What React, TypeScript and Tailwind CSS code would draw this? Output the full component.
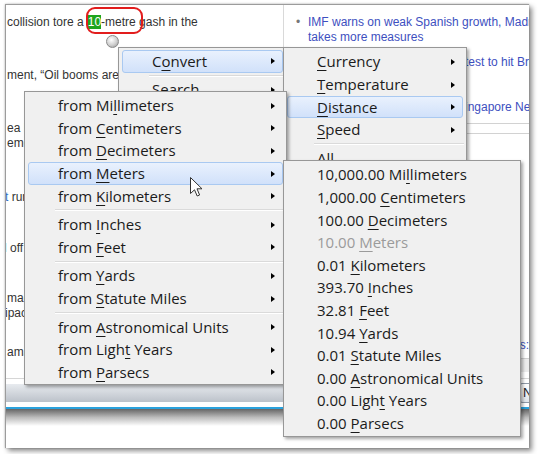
import clsx from "clsx";

type MenuEntry = { label: string; arrow?: boolean; active?: boolean; disabled?: boolean } | "sep";

const CONVERT_MENU: MenuEntry[] = [
  { label: "C&onvert", arrow: true, active: true },
  "sep",
  { label: "&Search", arrow: true },
  "sep",
  { label: "&Copy" },
  { label: "&Define" },
];

const CONVERSION_MENU: MenuEntry[] = [
  { label: "&Currency", arrow: true },
  { label: "&Temperature", arrow: true },
  { label: "&Distance", arrow: true, active: true },
  { label: "&Speed", arrow: true },
  "sep",
  { label: "&All" },
];

const FROM_MENU: MenuEntry[] = [
  { label: "from Mi&llimeters", arrow: true },
  { label: "from &Centimeters", arrow: true },
  { label: "from &Decimeters", arrow: true },
  { label: "from &Meters", arrow: true, active: true },
  { label: "from &Kilometers", arrow: true },
  "sep",
  { label: "from &Inches", arrow: true },
  { label: "from &Feet", arrow: true },
  "sep",
  { label: "from &Yards", arrow: true },
  { label: "from &Statute Miles", arrow: true },
  "sep",
  { label: "from &Astronomical Units", arrow: true },
  { label: "from Ligh&t Years", arrow: true },
  { label: "from &Parsecs", arrow: true },
];

const RESULT_MENU: MenuEntry[] = [
  { label: "10,000.00 Mi&llimeters" },
  { label: "1,000.00 &Centimeters" },
  { label: "100.00 &Decimeters" },
  { label: "10.00 &Meters", disabled: true },
  { label: "0.01 &Kilometers" },
  { label: "393.70 &Inches" },
  { label: "32.81 &Feet" },
  { label: "10.94 &Yards" },
  { label: "0.01 &Statute Miles" },
  { label: "0.00 &Astronomical Units" },
  { label: "0.00 Ligh&t Years" },
  { label: "0.00 &Parsecs" },
];

// "&" marks the access key, as in a Windows resource file
function Mnemonic({ label }: { label: string }) {
  const i = label.indexOf("&");
  if (i < 0) return <>{label}</>;
  return (
    <>
      {label.slice(0, i)}
      <u className="underline decoration-1 underline-offset-[3px]">{label[i + 1]}</u>
      {label.slice(i + 2)}
    </>
  );
}

function Menu({ entries, className }: { entries: MenuEntry[]; className: string }) {
  return (
    <div
      className={clsx(
        "absolute border border-[#979797] bg-[#f0f0f0] font-['Open_Sans',sans-serif] text-[15px] text-[#1b1b1b] shadow-[2px_2px_3px_rgba(0,0,0,0.35)]",
        className,
      )}
    >
      {entries.map((entry, i) =>
        entry === "sep" ? (
          <div key={i} className="flex h-[6px] items-center pl-[30px] pr-[2px]">
            <div className="h-[2px] w-full border-t border-b border-t-[#dadada] border-b-white" />
          </div>
        ) : (
          <div
            key={i}
            className={clsx(
              "mx-[3px] flex h-[22.6px] items-center justify-between rounded-[3px] border pl-[29px] pr-[7px]",
              entry.active
                ? "border-[#a9c9f1] bg-gradient-to-b from-[#e9f1fd] to-[#d1e1fa]"
                : "border-transparent",
              entry.disabled && "text-[#9b9b9b]",
            )}
          >
            <span className="whitespace-nowrap leading-none">
              <Mnemonic label={entry.label} />
            </span>
            {entry.arrow && (
              <span className="h-0 w-0 border-y-[3.5px] border-l-[4px] border-y-transparent border-l-black" />
            )}
          </div>
        ),
      )}
    </div>
  );
}

function ArticleColumn() {
  return (
    <div className="w-[277px] overflow-hidden whitespace-nowrap pl-[1px] text-[12px] leading-[15px] text-[#333]">
      <p className="mt-[9.5px] h-[15px]">
        collision tore a
        <span className="ml-[4px] bg-[#1ea51e] text-white">10</span>-metre gash in the
      </p>
      <p className="mt-[38px]">ment, “Oil booms are not forever,” he said.</p>
      <p className="mt-[38px]">
        ea has been closed to shipping
        <br />
        emergency crews were sent out
      </p>
      <p className="-ml-[2px] mt-[39px]">
        <span className="text-[#2e6fc8]">t</span> runs along the coast
      </p>
      <p className="-ml-[3px] mt-[36px]">
        <span className="text-[#2e6fc8]">l</span> off the northern shore
      </p>
      <p className="mt-[35px]">
        magnitude of the spill
        <br />
        <span className="-ml-[2px]">ipact on the fishing grounds</span>
      </p>
      <p className="mt-[24px]">amazing recovery</p>
    </div>
  );
}

function NewsColumn() {
  return (
    <div className="flex-1 overflow-hidden whitespace-nowrap border-l border-[#d9d9d9] text-[12px] leading-[15px] text-[#3d4fc0]">
      <div className="mt-[9.5px] flex">
        <span className="w-[24px] shrink-0 pl-[12px] text-[#777]">•</span>
        <div>
          IMF warns on weak Spanish growth, Madrid
          <br />
          takes more measures
        </div>
      </div>
      <p className="mt-[10px] pl-[181px]">test to hit Britain</p>
      <p className="mt-[30px] pl-[173px]">Singapore News</p>
      <div className="mt-[8.5px] h-[11px] border-y border-[#d2d2d2]" />
      <p className="mt-[203.5px] text-right">Videos:</p>
      <div className="mt-[5.5px] h-[14px] border-t border-[#cfcfcf] bg-[#ececec]" />
    </div>
  );
}

export default function App() {
  return (
    <div className="relative h-[454px] w-[540px] overflow-hidden bg-white pl-[5px] pt-[4px] font-['Liberation_Sans',Arial,sans-serif]">
      <div className="flex h-[444px] w-[524px] flex-col overflow-hidden border-l border-t border-[#9c9c9c] bg-white shadow-[0_0_2px_rgba(0,0,0,0.25),3px_3px_5px_rgba(0,0,0,0.45)]">
        <div className="flex h-[374px] shrink-0 border-b border-[#d6d6d6]">
          <ArticleColumn />
          <NewsColumn />
        </div>
        <div className="h-[5px] shrink-0" />
        <div className="flex h-[18px] shrink-0 items-center bg-gradient-to-b from-[#e8ebef] to-[#bcc2ca] pl-[514px]">
          <span className="flex h-[20px] items-center whitespace-nowrap rounded-[2px] border border-[#8f9aa7] bg-gradient-to-b from-white to-[#dfe4ea] px-[2px] text-[13px] text-[#1b1b1b]">
            New
          </span>
        </div>
        <div className="h-[5px] shrink-0" />
        <div className="h-[2px] shrink-0 bg-[#2aa2dd]" />
        <div className="h-[17px] shrink-0 bg-gradient-to-b from-[#666] via-[#bdbdbd] to-white" />
      </div>

      {/* annotation drawn on the screenshot */}
      <div className="absolute left-[86px] top-[7px] h-[27px] w-[57px] rounded-[9px] border-2 border-[#e21d1d]" />
      <div className="absolute left-[105.5px] top-[34.5px] h-[13px] w-[13px] rounded-full border border-[#8a8a8a] bg-[radial-gradient(circle_at_40%_35%,#ffffff,#cfcfcf_55%,#8e8e8e)]" />

      <Menu entries={CONVERT_MENU} className="left-[118px] top-[47px] z-10 w-[169px] pb-[2px] pt-[2px]" />
      <Menu entries={CONVERSION_MENU} className="left-[283px] top-[47px] z-20 w-[184px] pb-[2px] pt-[2.7px]" />
      <Menu entries={FROM_MENU} className="left-[24px] top-[91px] z-30 w-[263px] pb-[0.5px] pt-[2.5px]" />
      <Menu entries={RESULT_MENU} className="left-[283px] top-[160px] z-40 w-[238px] pb-[1px] pt-[2.7px]" />

      <svg className="absolute left-[190px] top-[177px] z-50" width="13" height="20" viewBox="0 0 13 20">
        <path
          d="M0.5 0.5 V16.5 L4.5 12.8 L7.2 19 L9.6 18 L7 11.8 H12 Z"
          fill="#fff"
          stroke="#333"
          strokeWidth="1"
          strokeLinejoin="round"
        />
      </svg>
    </div>
  );
}
